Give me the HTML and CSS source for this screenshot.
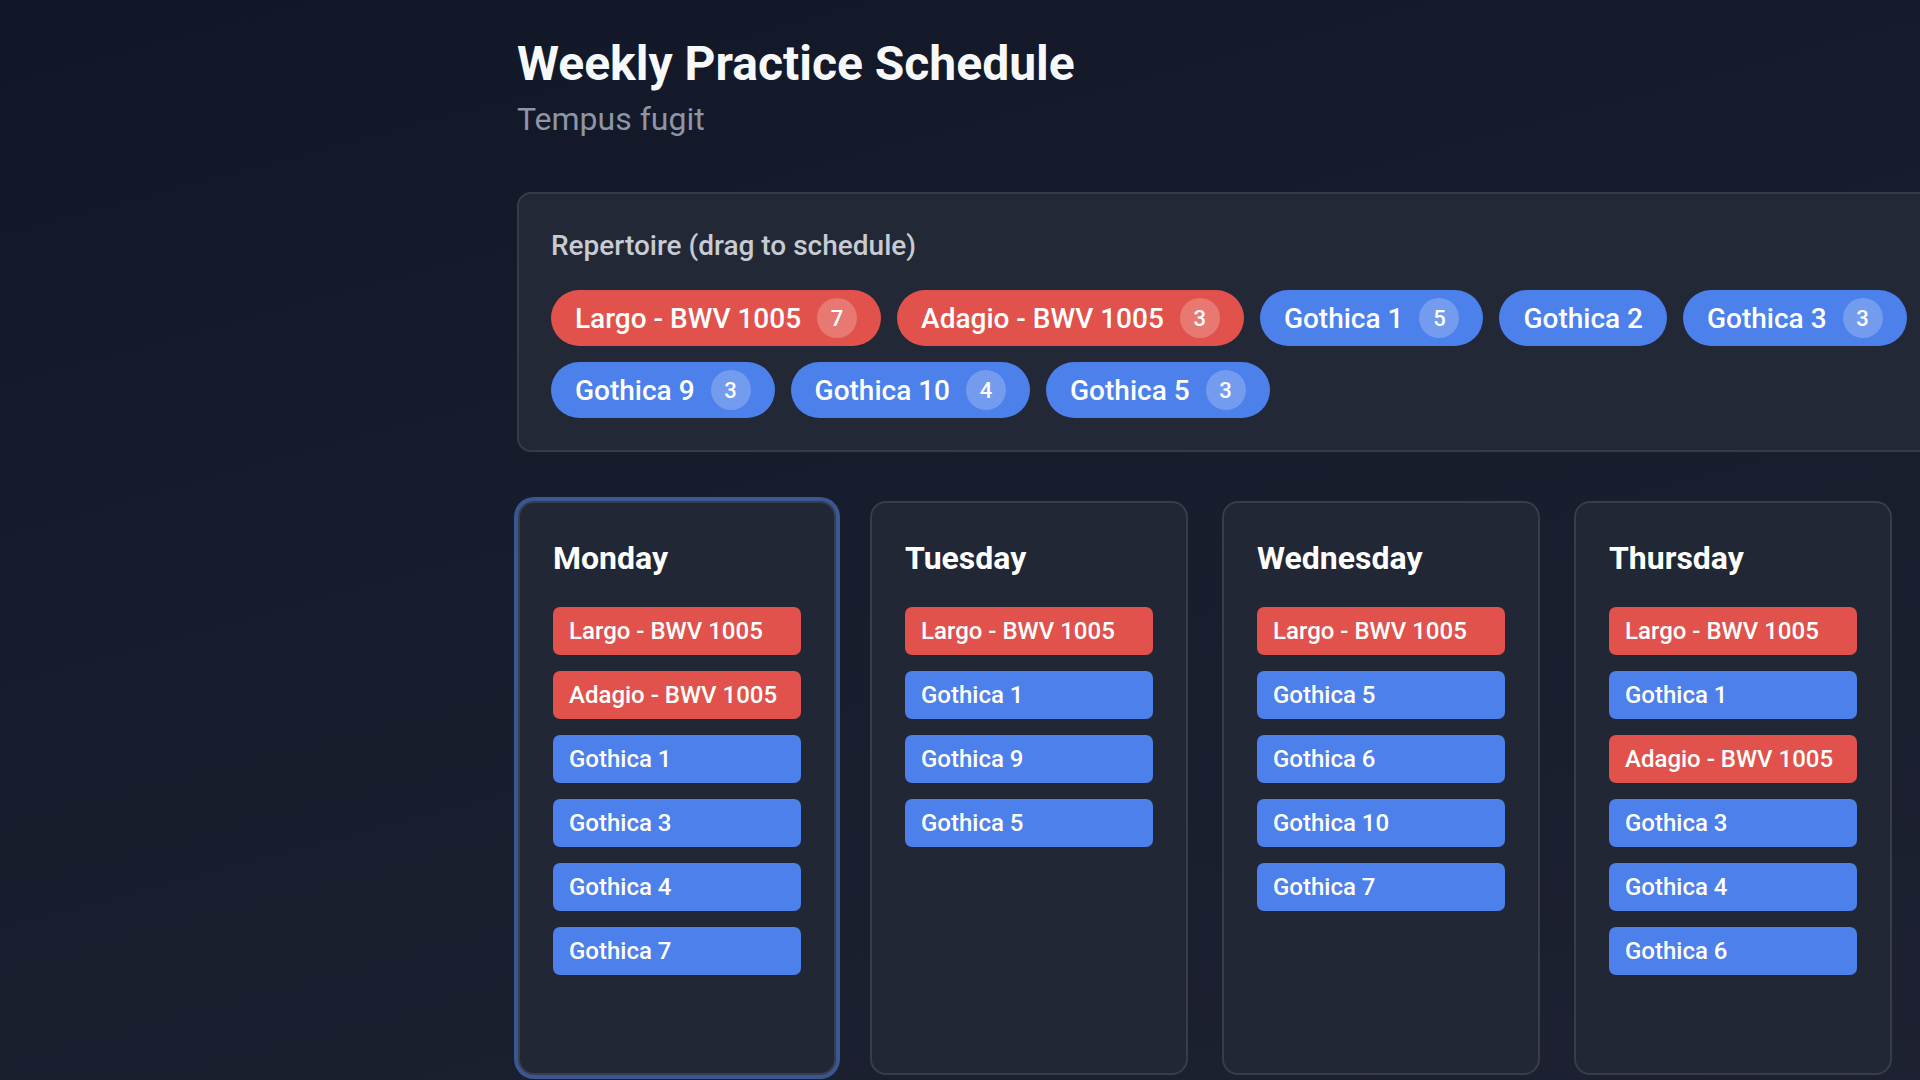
FILE: index.html
```html
<!DOCTYPE html>
<html lang="en">
<head>
<meta charset="utf-8">
<title>Weekly Practice Schedule</title>
<link rel="stylesheet" href="styles.css">
</head>
<body>
<main class="page">
  <header class="header">
    <h1 class="title">Weekly Practice Schedule</h1>
    <p class="subtitle">Tempus fugit</p>
  </header>

  <section class="repertoire">
    <h2 class="rep-label">Repertoire (drag to schedule)</h2>
    <div class="chips">
      <div class="chip chip-red"><span>Largo - BWV 1005</span><span class="badge">7</span></div>
      <div class="chip chip-red"><span>Adagio - BWV 1005</span><span class="badge">3</span></div>
      <div class="chip chip-blue"><span>Gothica 1</span><span class="badge">5</span></div>
      <div class="chip chip-blue"><span>Gothica 2</span></div>
      <div class="chip chip-blue"><span>Gothica 3</span><span class="badge">3</span></div>
      <div class="chip chip-blue"><span>Gothica 9</span><span class="badge">3</span></div>
      <div class="chip chip-blue"><span>Gothica 10</span><span class="badge">4</span></div>
      <div class="chip chip-blue"><span>Gothica 5</span><span class="badge">3</span></div>
    </div>
  </section>

  <section class="week">
    <div class="day day-active">
      <h3 class="day-name">Monday</h3>
      <div class="items">
        <div class="item item-red">Largo - BWV 1005</div>
        <div class="item item-red">Adagio - BWV 1005</div>
        <div class="item item-blue">Gothica 1</div>
        <div class="item item-blue">Gothica 3</div>
        <div class="item item-blue">Gothica 4</div>
        <div class="item item-blue">Gothica 7</div>
      </div>
    </div>
    <div class="day">
      <h3 class="day-name">Tuesday</h3>
      <div class="items">
        <div class="item item-red">Largo - BWV 1005</div>
        <div class="item item-blue">Gothica 1</div>
        <div class="item item-blue">Gothica 9</div>
        <div class="item item-blue">Gothica 5</div>
      </div>
    </div>
    <div class="day">
      <h3 class="day-name">Wednesday</h3>
      <div class="items">
        <div class="item item-red">Largo - BWV 1005</div>
        <div class="item item-blue">Gothica 5</div>
        <div class="item item-blue">Gothica 6</div>
        <div class="item item-blue">Gothica 10</div>
        <div class="item item-blue">Gothica 7</div>
      </div>
    </div>
    <div class="day">
      <h3 class="day-name">Thursday</h3>
      <div class="items">
        <div class="item item-red">Largo - BWV 1005</div>
        <div class="item item-blue">Gothica 1</div>
        <div class="item item-red">Adagio - BWV 1005</div>
        <div class="item item-blue">Gothica 3</div>
        <div class="item item-blue">Gothica 4</div>
        <div class="item item-blue">Gothica 6</div>
      </div>
    </div>
  </section>
</main>
</body>
</html>
```

FILE: styles.css
```css
html, body {
  margin: 0;
  padding: 0;
}

body {
  width: 1920px;
  height: 1080px;
  overflow: hidden;
  background: linear-gradient(165deg, #111726 0%, #171d2c 45%, #1d2131 100%);
  font-family: Roboto, "Liberation Sans", sans-serif;
  color: #ffffff;
}

.page {
  margin-left: 517px;
  width: 1600px;
  padding-top: 36px;
}

.header {
  margin-bottom: 54px;
}

.title {
  margin: 0;
  font-size: 48px;
  font-weight: 700;
  line-height: 56px;
  color: #f7f8fa;
}

.subtitle {
  margin: 9px 0 0;
  font-size: 32px;
  font-weight: 400;
  line-height: 37px;
  color: #8d95a6;
}

.repertoire {
  background: #222835;
  border: 2px solid #343b49;
  border-radius: 14px;
  padding: 35px 32px 32px;
}

.rep-label {
  margin: 0 0 28px;
  font-size: 28px;
  font-weight: 500;
  line-height: 33px;
  color: #c6cbd4;
}

.chips {
  display: flex;
  flex-wrap: wrap;
  gap: 16px 16px;
}

.chip {
  display: flex;
  align-items: center;
  gap: 16px;
  height: 56px;
  box-sizing: border-box;
  padding: 0 24px;
  border-radius: 28px;
  font-size: 28px;
  font-weight: 500;
  color: #ffffff;
}

.chip-red {
  background: #e0524b;
}

.chip-blue {
  background: #4c80ea;
}

.badge {
  display: flex;
  align-items: center;
  justify-content: center;
  width: 40px;
  height: 40px;
  border-radius: 50%;
  background: rgba(255, 255, 255, 0.22);
  font-size: 22px;
  font-weight: 500;
}

.week {
  display: flex;
  gap: 34px;
  margin-top: 49px;
  margin-left: 1px;
}

.day {
  flex: 0 0 318px;
  box-sizing: border-box;
  height: 574px;
  background: #212735;
  border: 2px solid #363d4b;
  border-radius: 16px;
  padding: 37px 33px 20px;
}

.day-active {
  box-shadow: 0 0 0 4px #3a5793;
}

.day-name {
  margin: 0 0 30px;
  font-size: 32px;
  font-weight: 700;
  line-height: 37px;
  color: #ffffff;
}

.items {
  display: flex;
  flex-direction: column;
  gap: 16px;
}

.item {
  height: 48px;
  box-sizing: border-box;
  padding: 0 16px;
  border-radius: 7px;
  display: flex;
  align-items: center;
  white-space: nowrap;
  font-size: 24px;
  font-weight: 500;
  color: #ffffff;
}

.item-red {
  background: #e0524b;
}

.item-blue {
  background: #4c80ea;
}
```
